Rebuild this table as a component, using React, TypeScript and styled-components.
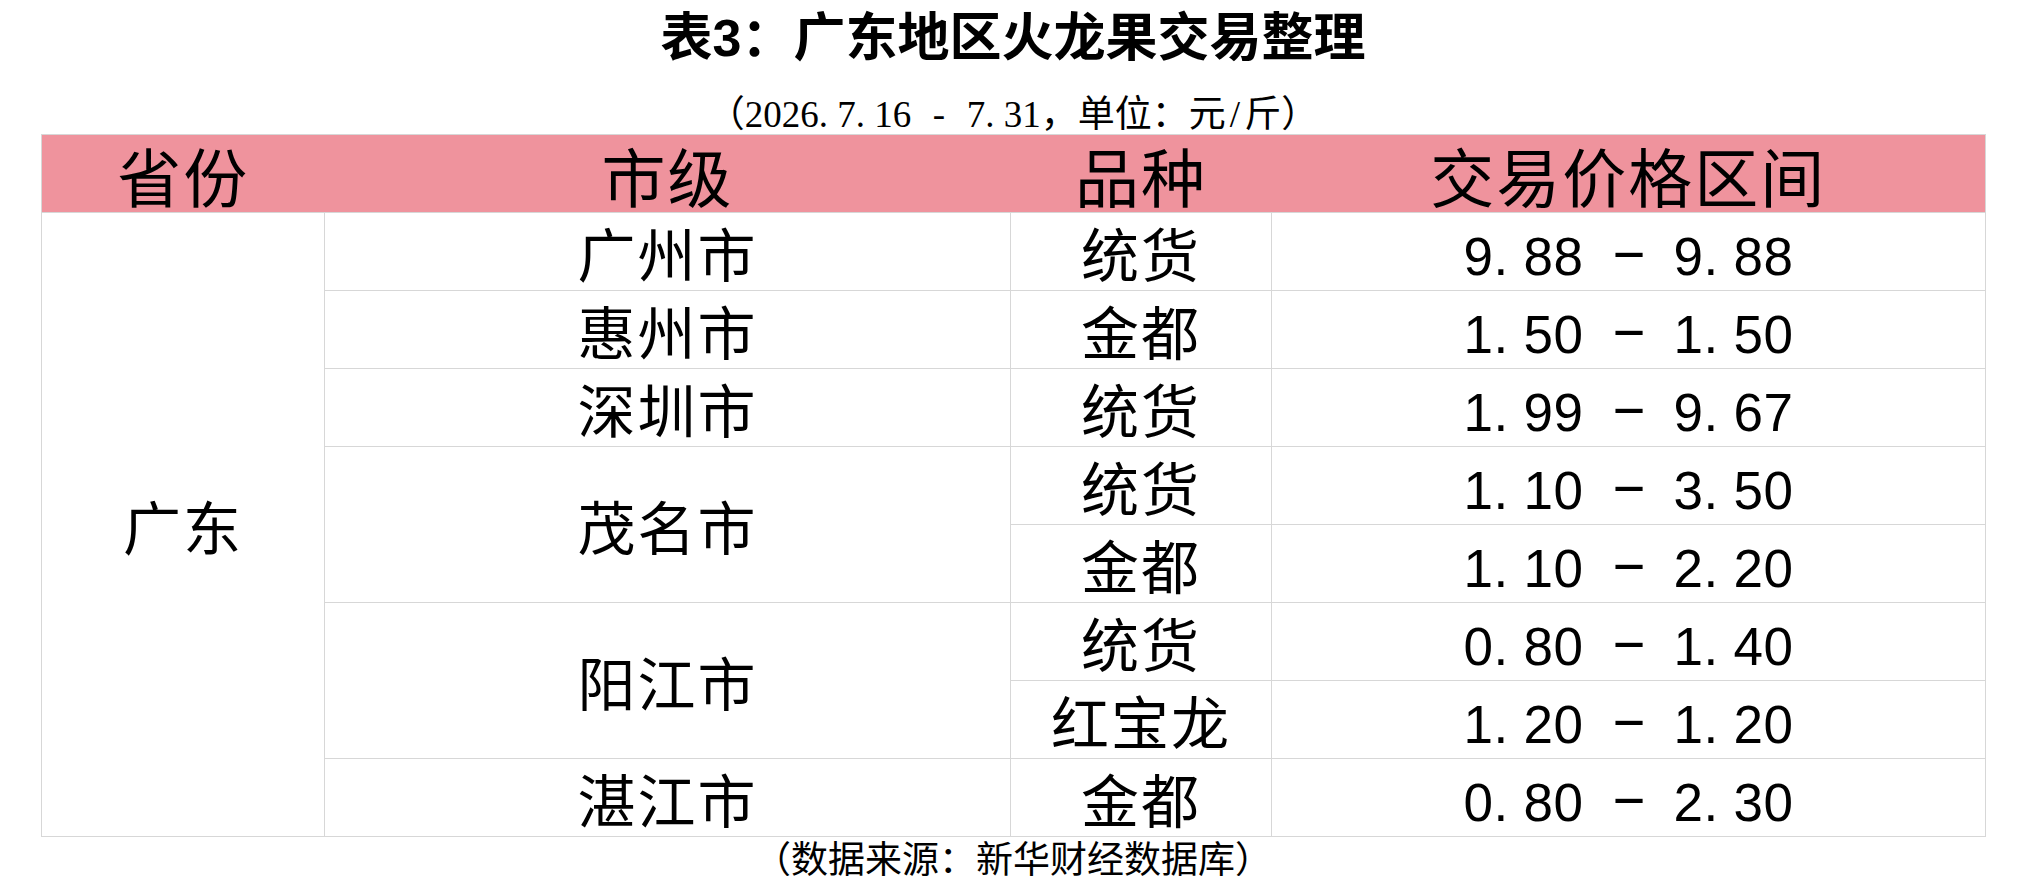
import React from "react";
import styled, { createGlobalStyle } from "styled-components";

interface Item {
    kind: string
    price: string
}

interface CityRow {
    city: string
    items: Item[]
}

const rows: CityRow[] = [
    { city: "广州市", items: [{ kind: "统货", price: "9.88 - 9.88" }] },
    { city: "惠州市", items: [{ kind: "金都", price: "1.50 - 1.50" }] },
    { city: "深圳市", items: [{ kind: "统货", price: "1.99 - 9.67" }] },
    { city: "茂名市", items: [{ kind: "统货", price: "1.10 - 3.50" }, { kind: "金都", price: "1.10 - 2.20" }] },
    { city: "阳江市", items: [{ kind: "统货", price: "0.80 - 1.40" }, { kind: "红宝龙", price: "1.20 - 1.20" }] },
    { city: "湛江市", items: [{ kind: "金都", price: "0.80 - 2.30" }] },
];

const CJK = `"Noto Sans CJK SC", "Noto Sans", sans-serif`;
const LINE = "#d7d7d7";

const GlobalStyle = createGlobalStyle`
    html, body {
        margin: 0;
        padding: 0;
        background: #ffffff;
        color: #000000;
        font-family: ${CJK};
    }
`

// half-width characters sit in fixed cells, like the spreadsheet font does
const Cell = styled.span<{ $w: number; $center?: boolean }>`
    display: inline-block;
    width: ${p => p.$w}px;
    text-align: ${p => (p.$center ? "center" : "left")};
`

const DashCell = styled(Cell)<{ $stretch: number; $lift: number }>`
    text-align: center;
    transform: translateY(${p => -p.$lift}px) scaleX(${p => p.$stretch});
`

const halfWidth = (text: string, w: number, stretch: number, lift: number) =>
    Array.from(text).map((ch, i) => {
        if (ch.charCodeAt(0) > 127) return <React.Fragment key={i}>{ch}</React.Fragment>;
        if (ch === "-") return <DashCell key={i} $w={w} $stretch={stretch} $lift={lift}>{ch}</DashCell>;
        return <Cell key={i} $w={w} $center={ch === "/"}>{ch}</Cell>;
    });

const Page = styled.div`
    width: 1944px;
    margin-left: 41px;
    padding-top: 8px;
`

const Title = styled.h1`
    height: 52px;
    margin: 0 0 33px;
    font-family: ${CJK};
    font-size: 52px;
    line-height: 52px;
    font-weight: 700;
    text-align: center;
    white-space: nowrap;
`

const TitleNum = styled.span`
    font-family: "Liberation Sans", sans-serif;
`

const Subtitle = styled.div`
    height: 37px;
    margin-bottom: 4px;
    font-size: 37px;
    line-height: 37px;
    text-align: center;
    white-space: nowrap;
`

const SerifRun = styled.span`
    font-family: "Liberation Serif", serif;
`

const Table = styled.table`
    width: 1944px;
    border-collapse: collapse;
    table-layout: fixed;
    border: 1px solid ${LINE};
`

const HeadCell = styled.th`
    height: 77px;
    padding: 0;
    background: #ef939d;
    border-bottom: 1px solid ${LINE};
    font-size: 64px;
    line-height: 1;
    font-weight: 400;
    letter-spacing: 2px;
    text-align: center;
    white-space: nowrap;
`

const BodyCell = styled.td`
    height: 77px;
    padding: 0;
    border: 1px solid ${LINE};
    font-size: 58px;
    line-height: 1;
    letter-spacing: 2px;
    text-align: center;
    white-space: nowrap;
`

const PriceCell = styled(BodyCell)`
    height: 68px;
    padding-top: 9px;
    font-family: "Liberation Sans", sans-serif;
    font-size: 53px;
    letter-spacing: 0;
`

const Footer = styled.div`
    margin-top: 2px;
    font-size: 37px;
    line-height: 37px;
    text-align: center;
    white-space: nowrap;
`

const App = () => {
    const total = rows.reduce((n, r) => n + r.items.length, 0);

    return (
        <>
            <GlobalStyle />
            <Page>
                <Title>表<TitleNum>3</TitleNum>{"\uFF1A"}广东地区火龙果交易整理</Title>
                <Subtitle>
                    {"\uFF08"}<SerifRun>{halfWidth("2026.7.16 - 7.31", 18.5, 1, 0)}</SerifRun>{"\uFF0C"}单位{"\uFF1A"}元<SerifRun>{halfWidth("/", 18.5, 1, 0)}</SerifRun>斤{"\uFF09"}
                </Subtitle>
                <Table>
                    <colgroup>
                        <col style={{ width: 283 }} />
                        <col style={{ width: 686 }} />
                        <col style={{ width: 261 }} />
                        <col style={{ width: 714 }} />
                    </colgroup>
                    <thead>
                        <tr>
                            <HeadCell>省份</HeadCell>
                            <HeadCell>市级</HeadCell>
                            <HeadCell>品种</HeadCell>
                            <HeadCell>交易价格区间</HeadCell>
                        </tr>
                    </thead>
                    <tbody>
                        {rows.map((row, ri) =>
                            row.items.map((item, ii) => (
                                <tr key={`${ri}-${ii}`}>
                                    {ri === 0 && ii === 0 && <BodyCell rowSpan={total}>广东</BodyCell>}
                                    {ii === 0 && <BodyCell rowSpan={row.items.length}>{row.city}</BodyCell>}
                                    <BodyCell>{item.kind}</BodyCell>
                                    <PriceCell>{halfWidth(item.price, 30, 2.1, 6)}</PriceCell>
                                </tr>
                            ))
                        )}
                    </tbody>
                </Table>
                <Footer>{"\uFF08"}数据来源{"\uFF1A"}新华财经数据库{"\uFF09"}</Footer>
            </Page>
        </>
    )
}

export default App;
